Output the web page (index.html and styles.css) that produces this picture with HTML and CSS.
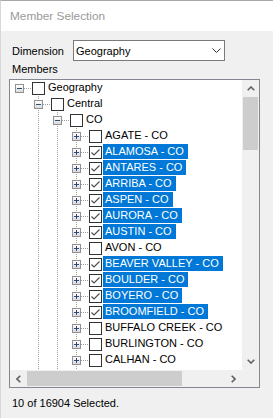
FILE: index.html
```html
<!DOCTYPE html>
<html lang="en">
<head>
  <meta charset="UTF-8" />
  <title>Member Selection</title>
  <link rel="stylesheet" href="styles.css">
</head>
<body>

  <div class="window">

    <!-- Title bar -->
    <div class="titlebar">Member Selection</div>

    <div class="content">

      <div class="dim-row">
        <span class="dim-label">Dimension</span>
        <div class="combo">
          <span>Geography</span>
          <svg width="9" height="5" viewBox="0 0 9 5"><polyline points="0.5,0.5 4.5,4.5 8.5,0.5" fill="none" stroke="#333" stroke-width="1"/></svg>
        </div>
      </div>

      <div class="members-label">Members</div>

      <!-- Tree -->
      <div class="tree-box">
        <div class="tree">

          <div class="row">
            <div class="node"><div class="exp minus"></div></div>
            <div class="cb"></div><span class="label">Geography</span>
          </div>

          <div class="row">
            <div class="guide"></div>
            <div class="node tee"><div class="exp minus"></div></div>
            <div class="cb"></div><span class="label">Central</span>
          </div>

          <div class="row">
            <div class="guide"></div><div class="guide line"></div>
            <div class="node tee"><div class="exp minus"></div></div>
            <div class="cb"></div><span class="label">CO</span>
          </div>

          <div class="row">
            <div class="guide"></div><div class="guide line"></div><div class="guide line"></div>
            <div class="node tee"><div class="exp plus"></div></div>
            <div class="cb"></div><span class="label">AGATE - CO</span>
          </div>

          <div class="row sel">
            <div class="guide"></div><div class="guide line"></div><div class="guide line"></div>
            <div class="node tee"><div class="exp plus"></div></div>
            <div class="cb"><svg width="11" height="11" viewBox="0 0 11 11"><polyline points="1.5,5.5 4,8 9.5,2.5" fill="none" stroke="#4a4a4a" stroke-width="1.1"/></svg></div><span class="label">ALAMOSA - CO</span>
          </div>

          <div class="row sel">
            <div class="guide"></div><div class="guide line"></div><div class="guide line"></div>
            <div class="node tee"><div class="exp plus"></div></div>
            <div class="cb"><svg width="11" height="11" viewBox="0 0 11 11"><polyline points="1.5,5.5 4,8 9.5,2.5" fill="none" stroke="#4a4a4a" stroke-width="1.1"/></svg></div><span class="label">ANTARES - CO</span>
          </div>

          <div class="row sel">
            <div class="guide"></div><div class="guide line"></div><div class="guide line"></div>
            <div class="node tee"><div class="exp plus"></div></div>
            <div class="cb"><svg width="11" height="11" viewBox="0 0 11 11"><polyline points="1.5,5.5 4,8 9.5,2.5" fill="none" stroke="#4a4a4a" stroke-width="1.1"/></svg></div><span class="label">ARRIBA - CO</span>
          </div>

          <div class="row sel">
            <div class="guide"></div><div class="guide line"></div><div class="guide line"></div>
            <div class="node tee"><div class="exp plus"></div></div>
            <div class="cb"><svg width="11" height="11" viewBox="0 0 11 11"><polyline points="1.5,5.5 4,8 9.5,2.5" fill="none" stroke="#4a4a4a" stroke-width="1.1"/></svg></div><span class="label">ASPEN - CO</span>
          </div>

          <div class="row sel">
            <div class="guide"></div><div class="guide line"></div><div class="guide line"></div>
            <div class="node tee"><div class="exp plus"></div></div>
            <div class="cb"><svg width="11" height="11" viewBox="0 0 11 11"><polyline points="1.5,5.5 4,8 9.5,2.5" fill="none" stroke="#4a4a4a" stroke-width="1.1"/></svg></div><span class="label">AURORA - CO</span>
          </div>

          <div class="row sel">
            <div class="guide"></div><div class="guide line"></div><div class="guide line"></div>
            <div class="node tee"><div class="exp plus"></div></div>
            <div class="cb"><svg width="11" height="11" viewBox="0 0 11 11"><polyline points="1.5,5.5 4,8 9.5,2.5" fill="none" stroke="#4a4a4a" stroke-width="1.1"/></svg></div><span class="label">AUSTIN - CO</span>
          </div>

          <div class="row">
            <div class="guide"></div><div class="guide line"></div><div class="guide line"></div>
            <div class="node tee"><div class="exp plus"></div></div>
            <div class="cb"></div><span class="label">AVON - CO</span>
          </div>

          <div class="row sel">
            <div class="guide"></div><div class="guide line"></div><div class="guide line"></div>
            <div class="node tee"><div class="exp plus"></div></div>
            <div class="cb"><svg width="11" height="11" viewBox="0 0 11 11"><polyline points="1.5,5.5 4,8 9.5,2.5" fill="none" stroke="#4a4a4a" stroke-width="1.1"/></svg></div><span class="label">BEAVER VALLEY - CO</span>
          </div>

          <div class="row sel">
            <div class="guide"></div><div class="guide line"></div><div class="guide line"></div>
            <div class="node tee"><div class="exp plus"></div></div>
            <div class="cb"><svg width="11" height="11" viewBox="0 0 11 11"><polyline points="1.5,5.5 4,8 9.5,2.5" fill="none" stroke="#4a4a4a" stroke-width="1.1"/></svg></div><span class="label">BOULDER - CO</span>
          </div>

          <div class="row sel">
            <div class="guide"></div><div class="guide line"></div><div class="guide line"></div>
            <div class="node tee"><div class="exp plus"></div></div>
            <div class="cb"><svg width="11" height="11" viewBox="0 0 11 11"><polyline points="1.5,5.5 4,8 9.5,2.5" fill="none" stroke="#4a4a4a" stroke-width="1.1"/></svg></div><span class="label">BOYERO - CO</span>
          </div>

          <div class="row sel">
            <div class="guide"></div><div class="guide line"></div><div class="guide line"></div>
            <div class="node tee"><div class="exp plus"></div></div>
            <div class="cb"><svg width="11" height="11" viewBox="0 0 11 11"><polyline points="1.5,5.5 4,8 9.5,2.5" fill="none" stroke="#4a4a4a" stroke-width="1.1"/></svg></div><span class="label">BROOMFIELD - CO</span>
          </div>

          <div class="row">
            <div class="guide"></div><div class="guide line"></div><div class="guide line"></div>
            <div class="node tee"><div class="exp plus"></div></div>
            <div class="cb"></div><span class="label">BUFFALO CREEK - CO</span>
          </div>

          <div class="row">
            <div class="guide"></div><div class="guide line"></div><div class="guide line"></div>
            <div class="node tee"><div class="exp plus"></div></div>
            <div class="cb"></div><span class="label">BURLINGTON - CO</span>
          </div>

          <div class="row">
            <div class="guide"></div><div class="guide line"></div><div class="guide line"></div>
            <div class="node tee"><div class="exp plus"></div></div>
            <div class="cb"></div><span class="label">CALHAN - CO</span>
          </div>

          <!-- next row is scrolled out of view, only its guide lines show -->
          <div class="row">
            <div class="guide"></div><div class="guide line"></div><div class="guide line"></div>
            <div class="node tee"></div>
          </div>

        </div>

        <!-- Vertical scrollbar -->
        <div class="vbar">
          <div class="sb-btn">
            <svg width="8" height="5" viewBox="0 0 8 5"><polyline points="0.7,4.3 4,1 7.3,4.3" fill="none" stroke="#606060" stroke-width="1.6"/></svg>
          </div>
          <div class="vtrack"><div class="vthumb"></div></div>
          <div class="sb-btn">
            <svg width="8" height="5" viewBox="0 0 8 5"><polyline points="0.7,0.7 4,4 7.3,0.7" fill="none" stroke="#606060" stroke-width="1.6"/></svg>
          </div>
        </div>

        <!-- Horizontal scrollbar -->
        <div class="hbar">
          <div class="sb-btn">
            <svg width="5" height="8" viewBox="0 0 5 8"><polyline points="4.3,0.7 1,4 4.3,7.3" fill="none" stroke="#606060" stroke-width="1.6"/></svg>
          </div>
          <div class="htrack"><div class="hthumb"></div></div>
          <div class="sb-btn">
            <svg width="5" height="8" viewBox="0 0 5 8"><polyline points="0.7,0.7 4,4 0.7,7.3" fill="none" stroke="#606060" stroke-width="1.6"/></svg>
          </div>
        </div>

        <div class="corner"></div>
      </div>

      <div class="status">10 of 16904 Selected.</div>

    </div>
  </div>

</body>
</html>
```

FILE: styles.css
```css
body {
  margin: 0;
  background-color: #f0f0f0;
  font-family: 'Liberation Sans', Arial, sans-serif;
  font-size: 11px;
  color: #000;
}

.window {
  width: 273px;
  height: 418px;
  box-sizing: border-box;
  border-top: 1px solid #a8a8a8;
  border-left: 1px solid #d8d8d8;
  background-color: #f0f0f0;
  overflow: hidden;
}

.titlebar {
  height: 30px;
  background-color: #fff;
  padding-left: 9px;
  display: flex;
  align-items: center;
  font-size: 11.8px;
  color: #9a9a9a;
}

.content {
  padding-top: 9px;
}

.dim-row {
  display: flex;
  align-items: center;
  padding-left: 11px;
}

.dim-label {
  width: 61px;
}

.combo {
  width: 152px;
  height: 21px;
  box-sizing: border-box;
  border: 1px solid #7a7a7a;
  background-color: #fff;
  display: flex;
  align-items: center;
  justify-content: space-between;
  padding: 0 3px 0 2px;
}

.members-label {
  height: 16px;
  line-height: 16px;
  padding-left: 11px;
}

.tree-box {
  margin: 2px 0 0 8px;
  width: 251px;
  height: 309px;
  box-sizing: border-box;
  border: 1px solid #828790;
  display: grid;
  grid-template-columns: 1fr 17px;
  grid-template-rows: 1fr 17px;
}

.tree {
  background-color: #fff;
  overflow: hidden;
}

.row {
  display: flex;
  align-items: flex-start;
  height: 16px;
}

.guide {
  width: 19px;
  height: 16px;
  flex: none;
}

.guide.line {
  background: repeating-linear-gradient(to bottom, #a0a0a0 0 1px, transparent 1px 2px) 9px 0 / 1px 100% no-repeat;
}

.node {
  width: 22px;
  height: 16px;
  flex: none;
  box-sizing: border-box;
  padding: 4px 0 0 5px;
  background: repeating-linear-gradient(to right, #a0a0a0 0 1px, transparent 1px 2px) 14px 8px / 8px 1px no-repeat;
}

.node.tee {
  background:
    repeating-linear-gradient(to right, #a0a0a0 0 1px, transparent 1px 2px) 14px 8px / 8px 1px no-repeat,
    repeating-linear-gradient(to bottom, #a0a0a0 0 1px, transparent 1px 2px) 9px 0 / 1px 100% no-repeat;
}

.exp {
  width: 9px;
  height: 9px;
  box-sizing: border-box;
  border: 1px solid #919191;
}

.exp.minus {
  background:
    linear-gradient(#2c4a7c, #2c4a7c) center / 5px 1px no-repeat,
    linear-gradient(#fff, #dadada);
}

.exp.plus {
  background:
    linear-gradient(#2c4a7c, #2c4a7c) center / 5px 1px no-repeat,
    linear-gradient(#2c4a7c, #2c4a7c) center / 1px 5px no-repeat,
    linear-gradient(#fff, #dadada);
}

.cb {
  width: 13px;
  height: 13px;
  margin-top: 2px;
  flex: none;
  box-sizing: border-box;
  border: 1px solid #333;
  background-color: #fff;
}

.cb svg {
  display: block;
}

.label {
  margin-left: 1px;
  padding: 0 4px 0 2px;
  height: 15px;
  line-height: 15px;
  white-space: nowrap;
}

.row.sel .label {
  background-color: #0078d7;
  color: #fff;
}

.vbar {
  display: flex;
  flex-direction: column;
  background-color: #f0f0f0;
}

.hbar {
  display: flex;
  background-color: #f0f0f0;
}

.sb-btn {
  width: 17px;
  height: 17px;
  flex: none;
  display: flex;
  align-items: center;
  justify-content: center;
}

.vtrack {
  flex: 1;
  padding: 0 1px;
}

.vthumb {
  height: 53px;
  background-color: #cdcdcd;
}

.htrack {
  flex: 1;
  padding: 1px 0;
}

.hthumb {
  width: 155px;
  height: 100%;
  background-color: #cdcdcd;
}

.corner {
  background-color: #f0f0f0;
}

.status {
  margin-top: 7px;
  padding-left: 11px;
  height: 16px;
  line-height: 16px;
}
```
